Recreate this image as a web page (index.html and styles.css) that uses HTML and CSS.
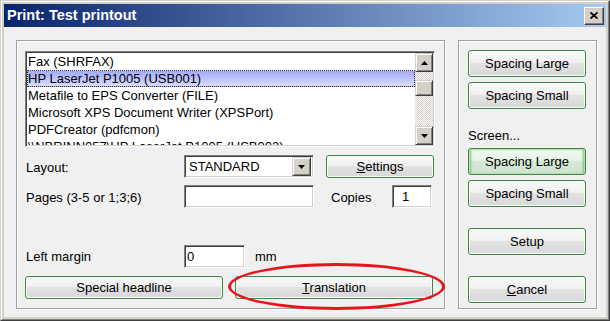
FILE: index.html
```html
<!DOCTYPE html>
<html lang="en">
<head>
    <meta charset="UTF-8">
    <title>Print: Test printout</title>
    <link rel="stylesheet" href="styles.css">
</head>
<body>
    <div class="window">
        <div class="frame">
            <div class="titlebar">
                <span class="title">Print: Test printout</span>
                <button class="close-button">
                    <svg width="8" height="7" viewBox="0 0 8 7"><path d="M0.5 0.5 L7.5 6.5 M7.5 0.5 L0.5 6.5" stroke="#000" stroke-width="1.8"/></svg>
                </button>
            </div>

            <div class="content">
                <div class="group main-group">
                    <div class="listbox">
                        <ul class="printer-list">
                            <li>Fax (SHRFAX)</li>
                            <li class="selected">HP LaserJet P1005 (USB001)</li>
                            <li>Metafile to EPS Converter (FILE)</li>
                            <li>Microsoft XPS Document Writer (XPSPort)</li>
                            <li>PDFCreator (pdfcmon)</li>
                            <li>\\NBRINN057\HP LaserJet P1005 (USB002)</li>
                        </ul>
                        <div class="scrollbar">
                            <div class="sb-button">
                                <svg width="7" height="4" viewBox="0 0 7 4"><polygon points="3.5,0 7,4 0,4" fill="#000"/></svg>
                            </div>
                            <div class="sb-track"><div class="sb-thumb"></div></div>
                            <div class="sb-button">
                                <svg width="7" height="4" viewBox="0 0 7 4"><polygon points="0,0 7,0 3.5,4" fill="#000"/></svg>
                            </div>
                        </div>
                    </div>

                    <div class="form-row row-layout">
                        <span class="label">Layout:</span>
                        <div class="combo">
                            <span class="combo-text">STANDARD</span>
                            <span class="combo-button">
                                <svg width="7" height="4" viewBox="0 0 7 4"><polygon points="0,0 7,0 3.5,4" fill="#000"/></svg>
                            </span>
                        </div>
                        <button class="btn settings-button"><u>S</u>ettings</button>
                    </div>

                    <div class="form-row row-pages">
                        <span class="label">Pages (3-5 or 1;3;6)</span>
                        <div class="field pages-field"></div>
                        <span class="copies-label">Copies</span>
                        <div class="field copies-field">1</div>
                    </div>

                    <div class="form-row row-margin">
                        <span class="label">Left margin</span>
                        <div class="field margin-field">0</div>
                        <span class="unit">mm</span>
                    </div>

                    <div class="button-row">
                        <button class="btn wide-button">Special headline</button>
                        <div class="circled">
                            <button class="btn wide-button"><u>T</u>ranslation</button>
                            <span class="red-ellipse"></span>
                        </div>
                    </div>
                </div>

                <div class="group side-group">
                    <button class="btn side-button">Spacing Large</button>
                    <button class="btn side-button gap-small">Spacing Small</button>
                    <div class="side-label">Screen...</div>
                    <button class="btn side-button focused">Spacing Large</button>
                    <button class="btn side-button gap-small">Spacing Small</button>
                    <button class="btn side-button gap-large">Setup</button>
                    <button class="btn side-button gap-large"><u>C</u>ancel</button>
                </div>
            </div>
        </div>
    </div>
</body>
</html>
```

FILE: styles.css
```css
* {
    box-sizing: border-box;
}
body {
    margin: 0;
    font-family: "Liberation Sans", Arial, sans-serif;
    font-size: 13px;
    color: #000;
    background-color: #d4d0c8;
}
.window {
    width: 610px;
    height: 321px;
    border: 1px solid;
    border-color: #d4d0c8 #404040 #404040 #d4d0c8;
}
.frame {
    height: 100%;
    display: flex;
    flex-direction: column;
    border: 1px solid;
    border-color: #fff #808080 #808080 #fff;
    padding: 2px;
    background-color: #d4d0c8;
}
.titlebar {
    height: 23px;
    flex: none;
    display: flex;
    align-items: center;
    justify-content: space-between;
    padding: 0 2px 0 3px;
    background: linear-gradient(to right, #0a246a, #a6caf0);
}
.title {
    color: #fff;
    font-weight: bold;
    font-size: 14.5px;
    margin-top: -1px;
}
.close-button {
    width: 20px;
    height: 18px;
    padding: 0;
    display: flex;
    align-items: center;
    justify-content: center;
    background-color: #d4d0c8;
    border: 1px solid;
    border-color: #fff #404040 #404040 #fff;
    box-shadow: inset -1px -1px #808080;
}
.content {
    flex: 1;
    display: flex;
    gap: 13px;
    padding: 13px 9px 8px 12px;
    background-color: #f0f0f0;
}
.group {
    border: 1px solid #a0a0a0;
    box-shadow: inset 1px 1px #fff, 1px 1px #fff;
    height: 269px;
}
.main-group {
    width: 429px;
    padding: 10px 9px 0 8px;
}
.side-group {
    width: 139px;
    padding: 9px 10px 0 9px;
    display: flex;
    flex-direction: column;
}

/* list of printers */
.listbox {
    height: 96px;
    display: flex;
    background-color: #fff;
    border: 1px solid;
    border-color: #808080 #fff #fff #808080;
    box-shadow: inset 1px 1px #404040, inset -1px -1px #d4d0c8;
    padding: 1px;
    overflow: hidden;
}
.printer-list {
    flex: 1;
    list-style: none;
    margin: 0;
    padding: 0;
    overflow: hidden;
}
.printer-list li {
    height: 17px;
    line-height: 17px;
    padding-left: 1px;
    white-space: nowrap;
}
.printer-list li.selected {
    background: linear-gradient(#a3aaf6, #d9dcff);
    border: 1px dotted #333;
    line-height: 15px;
    padding-left: 0;
}
.scrollbar {
    width: 18px;
    flex: none;
    display: flex;
    flex-direction: column;
}
.sb-button {
    height: 19px;
    flex: none;
    display: flex;
    align-items: center;
    justify-content: center;
    background-color: #d4d0c8;
    border: 1px solid;
    border-color: #d4d0c8 #404040 #404040 #d4d0c8;
    box-shadow: inset 1px 1px #fff, inset -1px -1px #808080;
}
.sb-track {
    flex: 1;
    background: repeating-conic-gradient(#d4d0c8 0 25%, #fff 0 50%) 0 0 / 2px 2px;
}
.sb-thumb {
    height: 16px;
    margin-top: 8px;
    background-color: #d4d0c8;
    border: 1px solid;
    border-color: #d4d0c8 #404040 #404040 #d4d0c8;
    box-shadow: inset 1px 1px #fff, inset -1px -1px #808080;
}

/* form rows */
.form-row {
    display: flex;
    align-items: center;
    height: 23px;
}
.row-layout {
    margin-top: 8px;
}
.row-pages {
    margin-top: 7px;
}
.row-margin {
    margin-top: 37px;
}
.label {
    width: 159px;
    padding-left: 1px;
    padding-top: 2px;
}
.row-margin .label {
    padding-top: 0;
}
.field, .combo {
    height: 23px;
    background-color: #fff;
    border: 1px solid;
    border-color: #808080 #fff #fff #808080;
    box-shadow: inset 1px 1px #404040, inset -1px -1px #d4d0c8;
    line-height: 21px;
}
.combo {
    width: 130px;
    display: flex;
    justify-content: space-between;
    padding: 1px 2px 1px 4px;
    line-height: 19px;
}
.combo-button {
    width: 19px;
    height: 19px;
    display: flex;
    align-items: center;
    justify-content: center;
    background-color: #d4d0c8;
    border: 1px solid;
    border-color: #d4d0c8 #404040 #404040 #d4d0c8;
    box-shadow: inset 1px 1px #fff, inset -1px -1px #808080;
}
.pages-field {
    width: 130px;
}
.copies-label {
    margin-left: 17px;
    width: 61px;
    padding-top: 2px;
}
.copies-field {
    width: 40px;
    padding-left: 9px;
}
.margin-field {
    width: 61px;
    padding-left: 2px;
}
.unit {
    margin-left: 10px;
}

/* buttons */
.btn {
    font-family: "Liberation Sans", Arial, sans-serif;
    font-size: 13px;
    color: #000;
    padding: 0;
    border: 1px solid #3c8a40;
    border-radius: 3px;
    background: linear-gradient(#fafafa 0%, #f0f0f0 45%, #e2e2e2 50%, #d9d9d9 92%, #e6e6e6 100%);
    box-shadow: inset 0 0 0 1px #fbfbfb;
}
.btn u {
    text-decoration-thickness: 1px;
}
.settings-button {
    width: 108px;
    height: 23px;
    margin-left: 12px;
}
.button-row {
    display: flex;
    gap: 12px;
    margin-top: 8px;
}
.wide-button {
    width: 198px;
    height: 23px;
}
.circled {
    position: relative;
}
.red-ellipse {
    position: absolute;
    left: -7px;
    top: -13px;
    width: 217px;
    height: 47px;
    border: 3px solid #e8141c;
    border-radius: 50%;
    pointer-events: none;
}
.side-button {
    width: 118px;
    height: 27px;
    flex: none;
}
.gap-small {
    margin-top: 5px;
}
.gap-large {
    margin-top: 21px;
}
.side-label {
    height: 18px;
    line-height: 18px;
    margin-top: 18px;
    margin-bottom: 3px;
}
.side-button.focused {
    background: linear-gradient(#f2f9f2 0%, #e6f2e6 45%, #d6e8d6 50%, #d0e2d0 92%, #dcebdc 100%);
    box-shadow: inset 0 0 0 1px #b6dcb6, inset 2px 0 2px #7cc07c, inset -2px 0 2px #7cc07c;
}
```
